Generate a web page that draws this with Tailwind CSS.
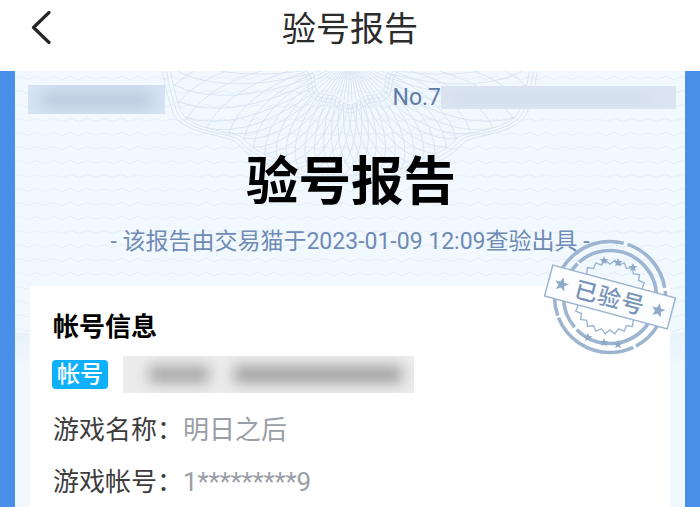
<!DOCTYPE html>
<html lang="zh">
<head>
<meta charset="utf-8">
<script src="https://cdn.jsdelivr.net/npm/@tailwindcss/browser@4"></script>
</head>
<body class="m-0 overflow-hidden bg-white font-['Roboto','Noto_Sans_CJK_SC',sans-serif]">
<div class="flex h-[507px] w-[700px] flex-col overflow-hidden">
  <header class="relative flex h-[71px] shrink-0 items-center justify-center bg-white">
    <svg class="absolute left-[31px] top-[11px]" width="20" height="33" viewBox="0 0 20 33" fill="none"><path d="M18 1.500 L2.500 16.500 L18 31.500" stroke="#262626" stroke-width="3.200" stroke-linecap="round" stroke-linejoin="round"/></svg>
    <h1 class="mb-[13px] text-[34px] font-normal leading-none text-[#2b2b2b]">验号报告</h1>
  </header>
  <div class="flex min-h-0 flex-1 bg-[#4a90e8] px-[15px]">
    <main class="relative min-w-0 flex-1 overflow-hidden bg-[#f2f9fe]">
      <svg class="absolute inset-0" width="670" height="436" fill="none">
        <defs>
          <pattern id="w" width="34" height="14" patternUnits="userSpaceOnUse">
            <path d="M0 7 q4.250 -3 8.500 0 t8.500 0 t8.500 0 t8.500 0" stroke="#e3edf7" stroke-width="1"/>
          </pattern>
          <linearGradient id="f" x1="0" y1="0" x2="0" y2="1">
            <stop offset="0" stop-color="#e9f1fa"/>
            <stop offset="1" stop-color="#f2f9fe"/>
          </linearGradient>
        </defs>
        <rect width="670" height="262" fill="url(#w)"/>
        <g id="guilloche" stroke="#d6e3f0" stroke-width="0.9"></g>
        <rect x="0" y="262" width="670" height="40" fill="url(#f)"/>
      </svg>
      <div class="relative flex h-full flex-col">
        <div class="flex h-[71px] shrink-0 items-start justify-between pl-[13px] pr-[9px] pt-[14px]">
          <div class="h-[29px] w-[137px] overflow-hidden bg-[#d5e3f3]">
            <div class="ml-[14px] mt-[7px] h-[15px] w-[110px] bg-[#b9c9dd] blur-[7px]"></div>
          </div>
          <div class="flex items-center pt-px">
            <span class="text-[23px] leading-[23px] text-[#5f7ba6]">No.7</span>
            <div class="h-[23px] w-[235px] overflow-hidden bg-[#dbe5f1]">
              <div class="ml-[8px] mt-[5px] h-[13px] w-[200px] bg-[#d4dfec] blur-[7px]"></div>
            </div>
          </div>
        </div>
        <h2 class="mt-[5px] pl-[2px] text-center text-[52.500px] font-bold leading-[70px] text-black">验号报告</h2>
        <p class="mt-[10px] text-center text-[23px] leading-[30px] text-[#6f8ab5]">- 该报告由交易猫于2023-01-09 12:09查验出具 -</p>
        <section class="mx-[15px] mt-[29px] flex-1 bg-white pl-[23px]">
          <h3 class="pt-[24px] text-[26px] font-bold leading-[34px] text-black">帐号信息</h3>
          <div class="mt-[12px] flex items-center">
            <span class="-ml-px flex h-[29px] w-[56px] items-center justify-center rounded-[4px] bg-[#0fb0fb] text-[23px] font-medium leading-none text-white">帐号</span>
            <div class="ml-[15px] h-[37px] w-[291px] overflow-hidden bg-[#ececec]">
              <div class="ml-[26px] mt-[10px] flex h-[17px] gap-[25px] blur-[7px]">
                <div class="h-full w-[60px] bg-[#a6a6a6]"></div>
                <div class="h-full w-[168px] bg-[#a0a0a0]"></div>
              </div>
            </div>
          </div>
          <div class="mt-[19px] flex text-[26px] leading-[36px]">
            <span class="text-[#3d3d3d]">游戏名称：</span><span class="text-[#9a9ea6]">明日之后</span>
          </div>
          <div class="mt-[16px] flex text-[26px] leading-[36px]">
            <span class="text-[#3d3d3d]">游戏帐号：</span><span class="tracking-[-0.2px] text-[#9a9ea6]">1*********9</span>
          </div>
        </section>
      </div>
      <svg class="absolute left-[525px] top-[161px]" width="140" height="130" viewBox="0 0 140 130" fill="none">
        <g stroke="#9db5d0">
          <circle cx="70" cy="65" r="55.500" stroke-width="3.600" stroke-dasharray="60 3 90 2 120 4"/>
          <circle cx="70" cy="65" r="46.500" stroke-width="3.600" stroke-dasharray="110 3 70 2"/>
          <path id="burst" stroke-width="1.400"/>
        </g>
        <g fill="#8fa9c8">
          <path d="M64 24 l1.300 3 3.200 .2 -2.500 2 .8 3.100 -2.800 -1.700 -2.800 1.700 .8 -3.100 -2.500 -2 3.200 -.2z"/>
          <path d="M78 26 l1.300 3 3.200 .2 -2.500 2 .8 3.100 -2.800 -1.700 -2.800 1.700 .8 -3.100 -2.500 -2 3.200 -.2z"/>
          <path d="M93 31 l1.300 3 3.200 .2 -2.500 2 .8 3.100 -2.800 -1.700 -2.800 1.700 .8 -3.100 -2.500 -2 3.200 -.2z"/>
          <path d="M48 101 l1.300 3 3.200 .2 -2.500 2 .8 3.100 -2.800 -1.700 -2.800 1.700 .8 -3.100 -2.500 -2 3.200 -.2z"/>
          <path d="M64 106 l1.300 3 3.200 .2 -2.500 2 .8 3.100 -2.800 -1.700 -2.800 1.700 .8 -3.100 -2.500 -2 3.200 -.2z"/>
          <path d="M78 108 l1.300 3 3.200 .2 -2.500 2 .8 3.100 -2.800 -1.700 -2.800 1.700 .8 -3.100 -2.500 -2 3.200 -.2z"/>
        </g>
        <g transform="rotate(15 70 65)">
          <rect x="6.500" y="49" width="127" height="32" fill="#fbfdff" stroke="#9db5d0" stroke-width="1.500"/>
          <text x="70" y="74" text-anchor="middle" font-size="23" font-weight="500" letter-spacing="1" fill="#7893b8" font-family="'Noto Sans CJK SC',sans-serif">已验号</text>
          <path d="M20 58 l2 5 5 .2 -4 3.200 1.400 5 -4.400 -2.800 -4.400 2.800 1.400 -5 -4 -3.200 5 -.2z" fill="#8fa9c8"/>
          <path d="M120 58 l2 5 5 .2 -4 3.200 1.400 5 -4.400 -2.800 -4.400 2.800 1.400 -5 -4 -3.200 5 -.2z" fill="#8fa9c8"/>
        </g>
      </svg>
    </main>
  </div>
</div>
<script>
  // security-paper rosette: fan and petals between two contours around the top centre
  var cx = 335, cy = -11;
  var knots = [[-0.6, 190], [0, 180], [0.28, 177], [0.65, 132], [1.05, 121], [1.57, 115]];
  function outer(a) {
    var d = Math.abs(a - Math.PI / 2); d = Math.PI / 2 - d;
    for (var i = 0; i < knots.length - 1; i++) {
      if (d <= knots[i + 1][0]) {
        var s = (d - knots[i][0]) / (knots[i + 1][0] - knots[i][0]);
        s = s * s * (3 - 2 * s);
        return knots[i][1] + (knots[i + 1][1] - knots[i][1]) * s;
      }
    }
    return 115;
  }
  function inner(a) { return 42 + 3 * Math.cos(a * 8); }
  function pt(a, r) { return (cx + r * Math.cos(a)).toFixed(1) + ' ' + (cy + r * Math.sin(a)).toFixed(1); }
  var out = '', k, a, p;
  for (k = 0; k < 40; k++) {
    a = -0.35 + k * (Math.PI + 0.7) / 39;
    [-0.3, 0.3].forEach(function (dl) {
      var b = a + dl;
      out += '<path d="M' + pt(a, inner(a)) + 'Q' + pt(a + dl * 0.2, (inner(a) + outer(b)) * 0.62) + ' ' + pt(b, outer(b)) + '"/>';
    });
    out += '<path d="M' + pt(a, 8) + 'L' + pt(a, inner(a) - 2) + '"/>';
  }
  [0, 4, 8].forEach(function (off) {
    p = '';
    for (a = -0.35; a <= Math.PI + 0.35; a += 0.04) { p += (p ? 'L' : 'M') + pt(a, outer(a) + off); }
    out += '<path d="' + p + '"/>';
    p = '';
    for (a = -0.35; a <= Math.PI + 0.35; a += 0.04) { p += (p ? 'L' : 'M') + pt(a, inner(a) + off); }
    out += '<path d="' + p + '"/>';
  });
  document.getElementById('guilloche').innerHTML = out;
  // stamp: sunburst ring behind the banner
  p = '';
  for (k = 0; k <= 48; k++) {
    var ang = k * Math.PI / 24, rr = k % 2 ? 37 : 33;
    p += (p ? 'L' : 'M') + (70 + rr * Math.cos(ang)).toFixed(1) + ' ' + (65 + rr * Math.sin(ang)).toFixed(1);
  }
  document.getElementById('burst').setAttribute('d', p + 'Z');
</script>
</body>
</html>
